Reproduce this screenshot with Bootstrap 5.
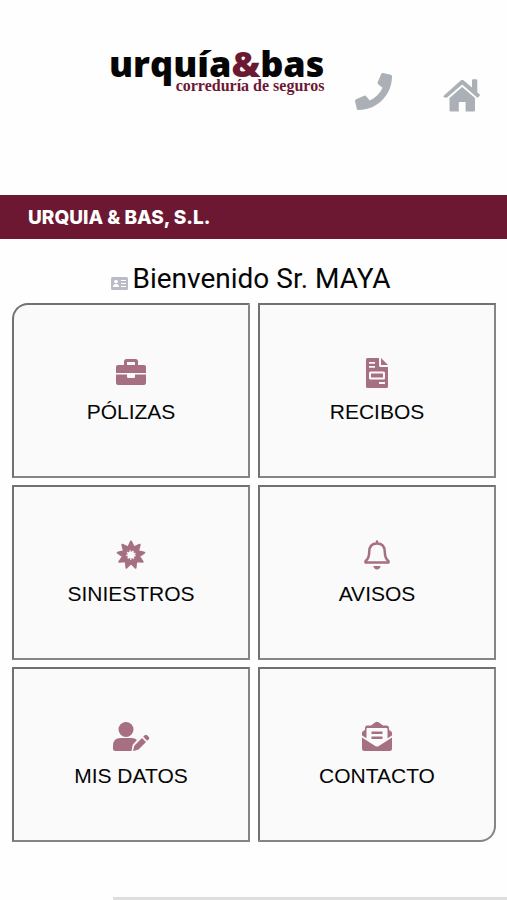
<!DOCTYPE html>
<html lang="es">
<head>
<meta charset="utf-8">
<meta name="viewport" content="width=device-width, initial-scale=1">
<title>Urquía &amp; Bas</title>
<link href="https://cdn.jsdelivr.net/npm/bootstrap@5.3.0/dist/css/bootstrap.min.css" rel="stylesheet">
<style>
  body { font-family: "Liberation Sans", Arial, sans-serif; background: #fefefe; color: #050505; }
  .site-header { min-height: 195px; padding: 40px 27px 0 109px; }
  .brand { color: #050505; padding-top: 9px; }
  .brand-name { font-family: "Open Sans", sans-serif; font-size: 36px; font-weight: 800; line-height: 30px; }
  .brand-name span, .brand-sub { color: #6d1833; }
  .brand-sub { font-family: "Liberation Serif", serif; font-size: 16px; font-weight: 700; line-height: 14px; }
  .quick { color: #abb0b6; gap: 51px; padding-top: 33px; }
  .company { background: #6d1833; color: #fff; font: 800 19px/24px Inter, sans-serif; padding: 11px 28px 9px; }
  .welcome { font: 400 28px/40px Roboto, sans-serif; margin: 20px 0 4px; padding-right: 5px; gap: 4px; }
  .welcome svg { color: #b9bcc4; margin-top: 8px; }
  .tiles { display: grid; grid-template-columns: 1fr 1fr; gap: 7px 8px; padding: 0 11px 0 12px; }
  .tile { min-height: 175px; background: #fafafa; border: 2px solid #858585; border-top-color: #717175; border-left-color: #717175; color: #050505; font-size: 21px; line-height: 28px; gap: 8px; }
  .tile svg { color: #a66f82; height: 34px; }
  .tile:first-child { border-top-left-radius: 16px; }
  .tile:last-child { border-bottom-right-radius: 16px; }
  .bottom-line { height: 3px; margin-left: 113px; background: #dedede; }
</style>
</head>
<body>
<div class="d-flex flex-column min-vh-100">
  <header class="site-header d-flex justify-content-between align-items-start">
    <a href="#" class="brand d-block text-decoration-none text-end text-nowrap">
      <div class="brand-name">urquía<span>&amp;</span>bas</div>
      <div class="brand-sub">correduría de seguros</div>
    </a>
    <nav class="quick d-flex" aria-label="Accesos">
      <a href="#" class="text-reset" aria-label="Llamar"><svg class="d-block" width="37" height="37" viewBox="0 0 512 512" fill="currentColor"><path d="M493.4 24.6l-104-24c-11.3-2.6-22.9 3.3-27.5 13.9l-48 112c-4.2 9.8-1.4 21.3 6.9 28l60.6 49.6c-36 76.7-98.9 140.5-177.2 177.2l-49.6-60.6c-6.8-8.3-18.2-11.1-28-6.9l-112 48C3.9 366.5-2 378.1.6 389.4l24 104C27.1 504.2 36.7 512 48 512c256.1 0 464-207.5 464-464 0-11.2-7.7-20.9-18.6-23.4z"/></svg></a>
      <a href="#" class="text-reset" aria-label="Inicio"><svg class="d-block" width="37" height="40" viewBox="0 0 37 40" fill="currentColor"><path d="M.7 22.7 18 7.2q1.2-1 2.400 0L29 14.500V7.200q0-1 1-1h3.300q1 0 1 1v12.100l2.200 2q.8.7.1 1.500l-1.300 1.400q-.7.7-1.500 0L19.200 11.600 4 24.500q-.8.7-1.500 0L.6 24q-.7-.7.1-1.300Z"/><path d="M6.500 25 19.200 14 32 25v12.300q0 1.200-1.200 1.200h-8.200V29h-6.800v9.500H7.700q-1.200 0-1.200-1.200Z"/></svg></a>
    </nav>
  </header>
  <div class="company">URQUIA &amp; BAS, S.L.</div>
  <main>
    <h1 class="welcome d-flex justify-content-center align-items-center">
      <svg width="17" height="13" viewBox="0 0 17 13" aria-hidden="true"><rect width="17" height="13" rx="1.5" fill="currentColor"/><g fill="#fff"><circle cx="5" cy="4.600" r="1.800"/><path d="M2 10q0-3 3-3t3 3Z"/><path d="M10 3h5v1h-5zm0 3h5v1h-5zm0 3h5v1h-5z"/></g></svg>
      <span>Bienvenido Sr. MAYA</span>
    </h1>
    <nav class="tiles" aria-label="Menú principal">
      <a href="#" class="tile d-flex flex-column align-items-center justify-content-center text-decoration-none">
        <svg width="30" height="34" viewBox="0 0 30 34" fill="currentColor"><path fill-rule="evenodd" d="M2 9h6V5.500Q8 3 10.500 3h9Q22 3 22 5.500V9h6q2 0 2 2v6H0V11q0-2 2-2Zm9 0h8V6h-8Z"/><path d="M0 18.500h11V21q0 1 1 1h6q1 0 1-1v-2.500h11V27q0 2-2 2H2q-2 0-2-2Z"/></svg>
        <span>PÓLIZAS</span></a>
      <a href="#" class="tile d-flex flex-column align-items-center justify-content-center text-decoration-none">
        <svg width="22" height="34" viewBox="0 0 22 34" fill="currentColor"><path fill-rule="evenodd" d="M1.500 2H13v7.500q0 1.500 1.500 1.500H22v19.500q0 1.500-1.500 1.500h-19Q0 32 0 30.500V3.500Q0 2 1.500 2ZM3 6v1.800h6V6Zm0 4v1.800h6V10Zm1.500 5.500Q3 15.500 3 17v5q0 1.500 1.500 1.500h13Q19 23.500 19 22v-5q0-1.500-1.500-1.500Zm.5 2h12v4H5Zm8 8.500v2h6v-2Z"/><path d="M15 2v7h7Z"/></svg>
        <span>RECIBOS</span></a>
      <a href="#" class="tile d-flex flex-column align-items-center justify-content-center text-decoration-none">
        <svg width="30" height="34" viewBox="-15 -17 30 34" fill="currentColor"><path stroke="currentColor" stroke-linejoin="round" stroke-width="2" d="M0-13.500 2.800-7.600 8.700-10.300 7.100-4.100 13.300-2.300 8 1.400 11.700 6.800 5.200 6.200 4.600 12.700 0 8.100-4.600 12.700-5.200 6.200-11.700 6.800-8 1.400-13.300-2.300-7.100-4.100-8.700-10.300-2.800-7.600Z"/><circle r="3.600" fill="#fafafa"/><circle r="4" fill="none" stroke="#fafafa" stroke-width="1.500" stroke-dasharray="1.400 1.400"/></svg>
        <span>SINIESTROS</span></a>
      <a href="#" class="tile d-flex flex-column align-items-center justify-content-center text-decoration-none">
        <svg width="26" height="34" viewBox="0 0 26 34" fill="none" stroke="currentColor" stroke-width="2.500" stroke-linejoin="round" stroke-linecap="round"><path d="M13 3.500v2M13 5.500q-7.800 0-7.800 8.500c0 5-1.400 7.300-3.700 9.300v1.200h23v-1.200c-2.300-2-3.700-4.300-3.700-9.300Q20.800 5.500 13 5.500Z"/><path d="M9.300 28h7.400q-.8 3.400-3.700 3.400T9.300 28Z" fill="currentColor" stroke="none"/></svg>
        <span>AVISOS</span></a>
      <a href="#" class="tile d-flex flex-column align-items-center justify-content-center text-decoration-none">
        <svg width="37" height="34" viewBox="0 0 37 34" fill="currentColor"><circle cx="13" cy="9.500" r="7.500"/><path d="M7.500 18h11q3.500 0 5.500 2l-4.300 4.700-1.200 6.300H2.500Q0 31 0 28.500V26q0-8 7.500-8Z"/><path d="m21.500 25.500 7.500-7.500 4 4-7.500 7.500-4.700 1.400q-.8 0-.6-.8ZM30.200 16.800l1.500-1.500q1.200-1.200 2.500 0l1.600 1.600q1.200 1.200 0 2.400l-1.600 1.500Z"/></svg>
        <span>MIS DATOS</span></a>
      <a href="#" class="tile d-flex flex-column align-items-center justify-content-center text-decoration-none">
        <svg width="30" height="34" viewBox="0 0 30 34" fill="currentColor"><path d="M0 17.500 13.200 26q1.800 1 3.600 0L30 17.500v11q0 2.500-2.500 2.500h-25Q0 31 0 28.500Z"/><path fill-rule="evenodd" d="M0 15.500V13q0-1 1-1.800L3 9.700V8q0-2.500 2.500-2.500H9l4-3q2-1.300 4 0l4 3h3.500Q27 5.500 27 8v1.700l2 1.500q1 .8 1 1.800v2.500l-4.500 2.700V9q0-1-1-1h-19q-1 0-1 1v9.200Z"/><path d="M9.500 11.500h11v2.500h-11Zm0 5h11V19h-11Z"/></svg>
        <span>CONTACTO</span></a>
    </nav>
  </main>
  <div class="bottom-line mt-auto"></div>
</div>
<script src="https://cdn.jsdelivr.net/npm/bootstrap@5.3.0/dist/js/bootstrap.bundle.min.js"></script>
</body>
</html>
